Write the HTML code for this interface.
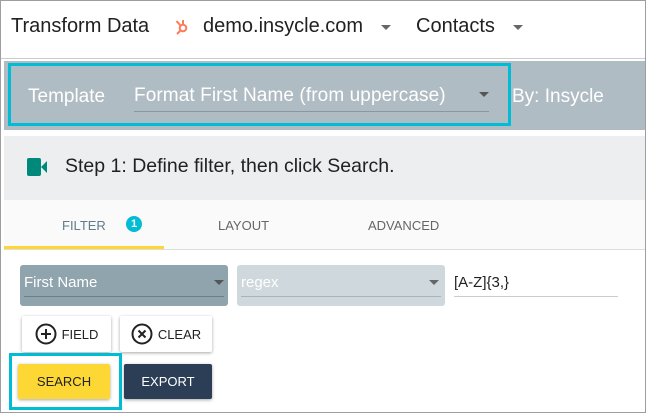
<!DOCTYPE html><html><head><style>
body{margin:0;width:646px;height:413px;overflow:hidden;font-family:"Liberation Sans",sans-serif;background:#fff;position:relative}
.a{position:absolute;white-space:nowrap}
.btn{position:absolute;background:#fff;box-shadow:0 1px 3px rgba(0,0,0,.35);border-radius:2px;font-size:13px;color:#222;display:flex;align-items:center;justify-content:center}
</style></head><body>
<div class="a" style="left:0;top:0;width:644px;height:411px;border:1px solid #9e9e9e"></div>
<div class="a" style="left:1px;top:58px;width:644px;height:1px;background:#ccc"></div>
<div class="a" style="left:11px;top:15px;font-size:20px;color:#212121">Transform Data</div>
<svg class="a" style="left:175px;top:17px" width="14" height="18" viewBox="0 0 14 18"><circle cx="8" cy="11" r="3.3" fill="none" stroke="#ff7a59" stroke-width="2"/><path d="M8 7.7V3M5.5 13.5L2 17M5.5 8.5L1.5 4" stroke="#ff7a59" stroke-width="2" fill="none"/></svg>
<div class="a" style="left:203px;top:15px;font-size:20px;color:#212121">demo.insycle.com</div>
<div class="a" style="left:381px;top:25px;border:5px solid transparent;border-top:5px solid #666;border-bottom:0"></div>
<div class="a" style="left:416px;top:15px;font-size:20px;color:#212121">Contacts</div>
<div class="a" style="left:513px;top:25px;border:5px solid transparent;border-top:5px solid #666;border-bottom:0"></div>

<div class="a" style="left:4px;top:61px;width:641px;height:69px;background:#b0bcc3"></div>
<div class="a" style="left:8px;top:63px;width:497px;height:57px;border:3px solid #00bcd4"></div>
<div class="a" style="left:28px;top:86px;font-size:19px;color:#fff">Template</div>
<div class="a" style="left:134px;top:85px;font-size:19px;color:#fff;letter-spacing:0.1px">Format First Name (from uppercase)</div>
<div class="a" style="left:134px;top:111px;width:355px;height:1px;background:#8a979e"></div>
<div class="a" style="left:479px;top:92px;border:5px solid transparent;border-top:5px solid #555;border-bottom:0"></div>
<div class="a" style="left:512px;top:86px;font-size:19px;color:#fff">By: Insycle</div>

<div class="a" style="left:4px;top:136px;width:641px;height:64px;background:#eceef0"></div>
<div class="a" style="left:27px;top:158px;width:14px;height:18px;background:#00897b;border-radius:2px"></div>
<div class="a" style="left:41px;top:161px;border:6px solid transparent;border-right:6px solid #00897b;border-left:0"></div>
<div class="a" style="left:65px;top:155px;font-size:19.5px;color:#212121">Step 1: Define filter, then click Search.</div>

<div class="a" style="left:4px;top:200px;width:641px;height:49px;background:#fafafa;border-bottom:1px solid #ddd"></div>
<div class="a" style="left:4px;top:246px;width:160px;height:3px;background:#fdd835"></div>
<div class="a" style="left:62px;top:218px;font-size:13px;color:#607d8b">FILTER</div>
<div class="a" style="left:126px;top:216px;width:16px;height:16px;border-radius:50%;background:#00bcd4;color:#fff;font-size:11px;text-align:center;line-height:16px;font-weight:bold">1</div>
<div class="a" style="left:218px;top:218px;font-size:13px;color:#666">LAYOUT</div>
<div class="a" style="left:368px;top:218px;font-size:13px;color:#666">ADVANCED</div>

<div class="a" style="left:20px;top:265px;width:208px;height:41px;background:#90a4ae;border-radius:3px"></div>
<div class="a" style="left:24px;top:274px;font-size:15px;color:#fff">First Name</div>
<div class="a" style="left:24px;top:296px;width:200px;height:1px;background:#6d7f87"></div>
<div class="a" style="left:214px;top:280px;border:5px solid transparent;border-top:5px solid #555;border-bottom:0"></div>

<div class="a" style="left:237px;top:265px;width:208px;height:41px;background:#cfd8dc;border-radius:3px"></div>
<div class="a" style="left:241px;top:274px;font-size:15px;color:#fff">regex</div>
<div class="a" style="left:241px;top:296px;width:200px;height:1px;background:#a9b4b9"></div>
<div class="a" style="left:429px;top:280px;border:5px solid transparent;border-top:5px solid #666;border-bottom:0"></div>

<div class="a" style="left:454px;top:274px;font-size:15px;color:#222">[A-Z]{3,}</div>
<div class="a" style="left:454px;top:296px;width:164px;height:1px;background:#ccc"></div>

<div class="btn" style="left:22px;top:316px;width:89px;height:36px">
<svg width="22" height="22" viewBox="0 0 22 22" style="margin-right:5px"><circle cx="11" cy="11" r="9.5" fill="none" stroke="#222" stroke-width="2"/><path d="M11 6v10M6 11h10" stroke="#222" stroke-width="2"/></svg>FIELD</div>
<div class="btn" style="left:120px;top:316px;width:92px;height:36px">
<svg width="22" height="22" viewBox="0 0 22 22" style="margin-right:5px"><circle cx="11" cy="11" r="9.5" fill="none" stroke="#222" stroke-width="2"/><path d="M7.5 7.5l7 7M14.5 7.5l-7 7" stroke="#222" stroke-width="2"/></svg>CLEAR</div>

<div class="a" style="left:9px;top:353px;width:107px;height:51px;border:3px solid #00bcd4"></div>
<div class="btn" style="left:18px;top:364px;width:92px;height:35px;background:#fdd835">SEARCH</div>
<div class="btn" style="left:124px;top:364px;width:88px;height:35px;background:#2c3e55;color:#fff">EXPORT</div>
</body></html>
